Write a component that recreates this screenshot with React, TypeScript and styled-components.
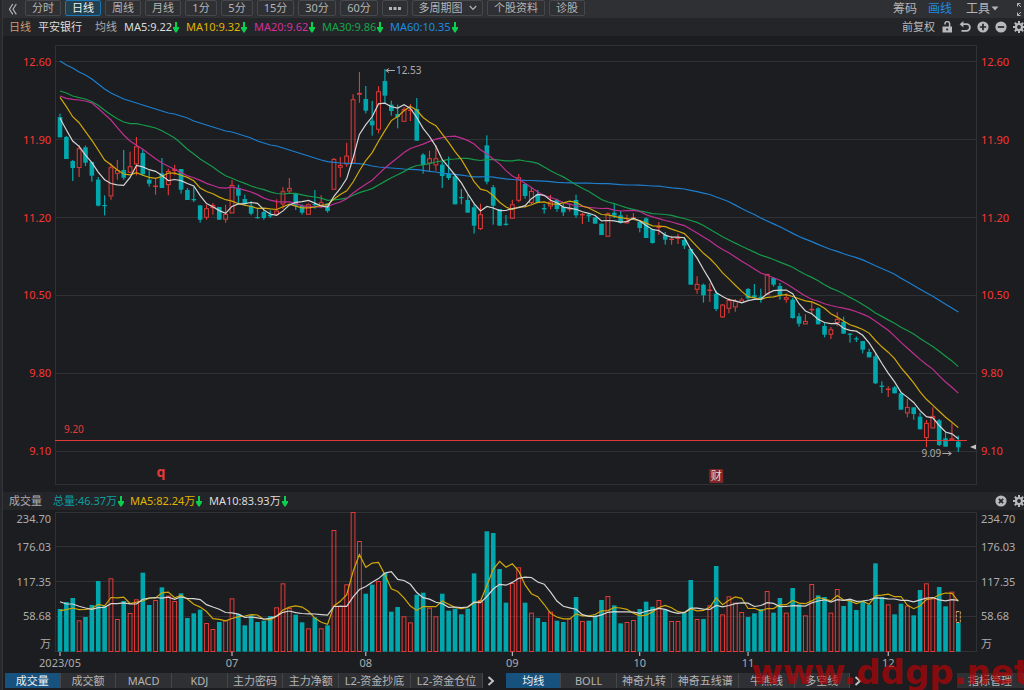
import React, { useLayoutEffect, useRef, useState } from 'react';
import styled, { createGlobalStyle, css } from 'styled-components';

const C = {
  page: '#1c1d20',
  bar: '#242528',
  tool: '#2f3033',
  edge: '#47484b',
  grid: '#303134',
  text: '#acacae',
  white: '#dcdcdc',
  up: '#e33b38',
  down: '#00a8ad',
  yellow: '#e0b400',
  pink: '#d0319c',
  green: '#15a64a',
  blue: '#1e8be0',
  arrow: '#0bd04f',
};

const GlobalStyle = createGlobalStyle`
  *, *::before, *::after { box-sizing: border-box; }
  body {
    margin: 0;
    background: ${C.page};
    color: ${C.text};
    font: 11px/16px "Noto Sans", "Noto Sans CJK SC", sans-serif;
    overflow-x: hidden;
  }
  button { font: inherit; color: inherit; margin: 0; padding: 0; border: 0; background: none; cursor: pointer; }
  svg { display: block; flex: none; }
`;

const Page = styled.main`
  position: relative;
  min-height: 100vh;
  overflow: hidden;
  border-left: 2px solid #27282b;
  box-shadow: inset 1px 0 0 #35363a;
  padding-left: 1px;
`;

const Toolbar = styled.nav`
  display: flex;
  justify-content: space-between;
  height: 18px;
  background: ${C.tool};
`;

const ToolGroup = styled.div`
  display: flex;
  gap: 4px;
  padding-left: 5px;
`;

const CollapseButton = styled.button`
  width: 13px;
  height: 16px;
`;

const PeriodButton = styled.button<{ $w: number; $active?: boolean }>`
  display: flex;
  align-items: center;
  justify-content: center;
  gap: 6px;
  width: ${p => p.$w}px;
  height: 16px;
  line-height: 14px;
  border: 1px solid ${C.edge};
  border-radius: 2px;
  color: #b4b4b6;
  white-space: nowrap;
  ${p => p.$active && css`
    border-color: #1b76b8;
    background: #22404f;
    color: #f0f0f0;
  `}
`;

const ToolLinks = styled.div`
  display: flex;
  align-items: center;
  gap: 11px;
  height: 17px;
  font-size: 12px;
`;

const ToolLink = styled.button<{ $active?: boolean; $push?: number }>`
  display: flex;
  align-items: center;
  gap: 1px;
  color: ${p => (p.$active ? C.blue : '#b4b4b6')};
  margin-left: ${p => p.$push ?? 0}px;
`;

const InfoBar = styled.header`
  display: flex;
  justify-content: space-between;
  align-items: center;
  height: 18px;
  padding-left: 6px;
  background: ${C.bar};
  white-space: nowrap;
`;

const InfoItems = styled.div`
  display: flex;
  align-items: center;
`;

const InfoItem = styled.span<{ $w: number; $color: string }>`
  display: flex;
  align-items: center;
  gap: 1px;
  width: ${p => p.$w}px;
  color: ${p => p.$color};
`;

const IconRow = styled.div`
  display: flex;
  align-items: center;
  gap: 6px;
  margin-right: -1px;
  color: #b9b9bb;
`;

const IconButton = styled.button`
  width: 12px;
  height: 12px;
`;

const ChartRow = styled.section<{ $kind: 'price' | 'volume' }>`
  display: grid;
  grid-template-columns: 52px minmax(0, 1fr) 47px;
  ${p => (p.$kind === 'price' ? 'padding: 9px 0 7px;' : 'padding-top: 2px;')}
`;

const PriceAxis = styled.div<{ $side: 'left' | 'right' }>`
  display: flex;
  flex-direction: column;
  justify-content: space-between;
  height: 440px;
  padding: 9px 4px 26px;
  color: #f93632;
  text-align: ${p => (p.$side === 'left' ? 'right' : 'left')};
`;

const VolumeAxis = styled.div<{ $side: 'left' | 'right' }>`
  display: grid;
  grid-template-rows: 14px 42px 28px 40px 16px;
  align-items: center;
  height: 161px;
  align-content: start;
  padding: 0 4px;
  text-align: ${p => (p.$side === 'left' ? 'right' : 'left')};
`;

const Plot = styled.svg`
  width: 100%;
  overflow: visible;
`;

const TabBar = styled.footer`
  display: flex;
  align-items: center;
  padding-left: 2px;
`;

const TabGroup = styled.div<{ $cols: string; $w: number }>`
  display: grid;
  grid-template-columns: ${p => p.$cols};
  width: ${p => p.$w}px;
`;

const Tab = styled.button<{ $active?: boolean }>`
  height: 15px;
  line-height: 15px;
  overflow: hidden;
  white-space: nowrap;
  background: ${C.tool};
  color: #b4b4b6;
  border-right: 1px solid #45464a;
  ${p => p.$active && css`
    background: #17527f;
    color: #f0f0f0;
  `}
`;

const NextButton = styled.button`
  display: flex;
  justify-content: center;
  width: 16px;
  margin-right: 7px;
`;

const ManageButton = styled(Tab)`
  width: 67px;
  margin-left: auto;
  padding-right: 1px;
  border-right: 0;
`;

const Watermark = styled.div`
  position: absolute;
  right: -6px;
  bottom: 0;
  font: bold 34px/36px "DejaVu Sans", sans-serif;
  color: rgba(182, 4, 8, 0.7);
  pointer-events: none;
`;

/* direction, high, body top, body bottom, low, volume top (chart units) */
type Bar = [0 | 1, number, number, number, number, number];

const scale = (originY: number, volY: number, rows: Bar[]): Bar[] =>
  rows.map(([k, h, t, b, l, v]) => [k, originY + h / 3, originY + t / 3, originY + b / 3, originY + l / 3, volY + v / 3] as Bar);

const bars: Bar[] = [
  ...scale(35, -12, [
    [0, 101, 111, 172, 172, 327], [0, 168, 171, 237, 237, 306], [0, 240, 243, 264, 303, 294], [1, 195, 205, 264, 291, 361],
    [0, 197, 202, 248, 258, 351], [0, 245, 246, 287, 305, 315], [0, 291, 299, 377, 379, 243], [0, 346, 375, 378, 406, 318],
    [1, 250, 262, 349, 359, 235], [1, 240, 270, 281, 299, 357], [0, 210, 270, 293, 299, 303], [1, 215, 259, 278, 278, 339],
    [1, 171, 199, 253, 286, 298], [0, 208, 219, 283, 288, 218], [0, 272, 299, 311, 320, 315], [1, 295, 317, 320, 344, 300],
    [0, 234, 280, 324, 324, 262], [1, 266, 273, 315, 346, 287], [1, 254, 267, 273, 286, 303], [0, 267, 267, 329, 341, 280],
    [0, 324, 330, 360, 360, 354], [0, 320, 357, 361, 366, 340], [0, 376, 376, 419, 428, 329], [1, 374, 385, 413, 419, 369],
    [1, 369, 375, 384, 404, 387], [0, 381, 381, 419, 419, 366], [1, 374, 402, 419, 428, 361], [1, 300, 315, 400, 400, 295],
    [0, 314, 324, 347, 370, 342], [0, 344, 357, 372, 376, 376], [0, 363, 377, 401, 406, 346], [0, 385, 411, 414, 416, 366],
    [0, 389, 396, 414, 419, 362], [0, 391, 404, 409, 414, 348], [1, 358, 392, 404, 404, 322],
  ]),
  ...scale(15, -12, [
    [1, 382, 394, 433, 446, 250], [1, 354, 384, 394, 402, 324], [0, 400, 402, 437, 450, 344], [0, 433, 437, 458, 464, 367],
    [1, 430, 433, 464, 464, 385], [0, 390, 432, 435, 446, 352], [1, 406, 427, 437, 445, 385], [0, 430, 430, 453, 458, 376],
    [1, 294, 297, 389, 389, 90], [1, 291, 315, 323, 352, 317], [1, 248, 287, 313, 320, 253], [1, 103, 118, 310, 312, 36],
    [1, 36, 99, 104, 128, 123], [0, 78, 117, 152, 160, 281], [0, 123, 182, 196, 227, 254], [1, 79, 94, 209, 220, 243],
    [0, 27, 63, 107, 131, 219], [0, 122, 134, 153, 167, 335], [0, 134, 162, 171, 205, 321], [1, 141, 147, 185, 185, 349],
    [1, 132, 149, 152, 183, 367], [0, 114, 147, 242, 242, 284], [0, 280, 284, 315, 341, 278], [1, 272, 295, 310, 336, 323],
    [1, 256, 295, 316, 332, 349], [0, 305, 314, 348, 384, 281], [0, 290, 342, 354, 360, 332], [0, 346, 349, 433, 433, 326],
    [0, 387, 411, 414, 433, 343], [0, 404, 420, 458, 458, 326], [0, 433, 442, 497, 521, 220], [1, 431, 463, 507, 510, 300],
    [0, 226, 256, 365, 373, 94], [0, 375, 382, 437, 494, 99], [0, 447, 447, 497, 497, 207], [0, 465, 491, 495, 497, 308],
    [1, 419, 433, 476, 476, 249],
  ]),
  ...scale(85, -12, [
    [1, 132, 142, 212, 217, 202], [0, 160, 162, 198, 206, 308], [1, 172, 183, 219, 223, 338], [0, 180, 192, 219, 219, 354],
    [0, 222, 234, 238, 251, 366], [1, 194, 215, 229, 238, 335], [0, 206, 210, 237, 245, 362], [0, 222, 231, 247, 258, 366],
    [1, 220, 235, 237, 245, 355], [0, 194, 210, 256, 263, 291], [1, 249, 252, 256, 282, 363], [0, 252, 254, 259, 276, 362],
    [0, 262, 262, 281, 281, 346], [0, 281, 281, 315, 315, 300], [1, 247, 250, 320, 320, 288], [0, 221, 248, 257, 264, 316],
    [0, 243, 256, 279, 281, 370], [1, 254, 273, 280, 280, 366], [1, 249, 262, 264, 270, 360], [0, 275, 275, 294, 307, 327],
    [0, 262, 265, 324, 324, 305], [0, 297, 297, 339, 341, 320], [1, 276, 290, 293, 315, 300], [0, 306, 315, 329, 344, 329],
    [1, 317, 326, 329, 344, 363], [1, 311, 323, 326, 342, 363], [0, 321, 330, 347, 357, 339], [0, 354, 357, 464, 464, 240],
    [1, 439, 462, 479, 491, 357], [0, 461, 464, 496, 518, 357], [1, 460, 479, 482, 516, 316], [0, 482, 491, 537, 543, 198],
    [1, 522, 524, 562, 564, 343],
  ]),
  ...scale(205, -22, [
    [1, 144, 150, 176, 190, 319], [1, 147, 153, 172, 185, 338], [1, 143, 149, 158, 160, 366], [0, 114, 117, 145, 149, 381],
    [0, 102, 136, 142, 150, 370], [0, 116, 140, 148, 158, 357], [1, 72, 72, 134, 134, 303], [0, 82, 84, 104, 110, 368],
    [0, 99, 108, 135, 149, 324], [1, 130, 142, 149, 158, 368], [0, 143, 149, 204, 206, 294], [0, 189, 199, 221, 230, 343],
    [1, 193, 213, 223, 223, 376], [1, 153, 177, 180, 190, 282], [0, 172, 175, 223, 223, 316], [0, 219, 228, 254, 262, 321],
    [1, 231, 238, 254, 267, 368], [1, 187, 207, 219, 229, 297], [0, 200, 216, 251, 251, 348], [0, 249, 251, 254, 278, 330],
    [0, 260, 265, 268, 276, 360], [0, 273, 273, 299, 310, 333], [0, 296, 306, 322, 322, 344], [0, 311, 319, 400, 402, 220],
    [0, 394, 407, 411, 429, 321], [1, 409, 416, 419, 441, 343], [0, 408, 412, 430, 430, 373], [0, 425, 430, 479, 479, 341],
    [1, 447, 471, 490, 502, 347], [0, 472, 472, 492, 509, 376], [0, 488, 500, 538, 538, 300], [1, 510, 519, 564, 592, 280],
    [1, 472, 498, 535, 535, 325], [0, 507, 511, 585, 588, 291], [0, 547, 565, 590, 590, 349], [1, 520, 565, 571, 573, 305],
    [0, 557, 575, 592, 606, 399],
  ]),
];

/* Moving average; `head` holds the points whose window starts before the first bar. */
const average = (values: number[], n: number, head: number[]) =>
  values.map((_, i) => (i < head.length ? head[i] : values.slice(i - n + 1, i + 1).reduce((a, b) => a + b, 0) / n));

const closes = bars.map(([k, , top, bottom]) => (k ? top : bottom));
const volumes = bars.map(b => b[5]);
const third = (origin: number, list: number[]) => list.map(v => origin + v / 3);

const priceLines = [
  {
    color: '#1c7fd0',
    points: average(closes, 60, [
      61, 65, 68, 72, 75, 79, 84, 89, 93, 96, 99, 101, 103, 105, 107, 109, 111, 113, 114, 116, 118, 121, 123, 125, 127, 129, 131, 132,
      134, 136, 138, 141, 143, 145, 146, 148, 150, 152, 154, 156, 158, 160, 161.7, 162.3, 163, 163.3, 163.5, 163.7, 164.5, 166, 167,
      167.5, 168, 168.5, 169, 169.3, 169.7, 170.3, 171.3, 172,
    ].map(v => v - 45)),
  },
  {
    color: '#16994a',
    points: average(closes, 30, third(35, [
      33, 39, 48, 53, 57, 65, 76, 91, 104, 116, 126, 131, 131, 135, 139, 144, 152, 163, 174, 190, 208, 222, 237, 249, 261, 275, 287, 295, 303,
    ])),
  },
  {
    color: '#bf2f92',
    points: average(closes, 20, third(35, [48, 55, 58, 60, 63, 69, 85, 103, 120, 143, 165, 183, 196, 208, 222, 236, 249, 259, 268])),
  },
  { color: '#cfa70a', points: average(closes, 10, third(35, [52, 80, 110, 128, 155, 181, 210, 240, 254])) },
  { color: '#d5d5d5', points: average(closes, 5, third(35, [115, 150, 183, 199])) },
];

const volumeLines = [
  { color: '#cfa70a', points: average(volumes, 5, third(-12, [332, 329, 324, 329])) },
  { color: '#d5d5d5', points: average(volumes, 10, third(-12, [305, 312, 312, 319, 324, 328, 323, 322, 311])) },
];

const months: [number, string][] = [[0, '2023/05'], [27, '07'], [48, '08'], [71, '09'], [91, '10'], [108, '11'], [130, '12']];

function usePlotWidth() {
  const ref = useRef<SVGSVGElement>(null);
  const [width, setWidth] = useState(922);
  useLayoutEffect(() => {
    const node = ref.current;
    if (!node) return;
    const measure = () => setWidth(node.getBoundingClientRect().width);
    measure();
    const observer = new ResizeObserver(measure);
    observer.observe(node);
    return () => observer.disconnect();
  }, []);
  const x = (i: number) => 5 + ((width - 23.7) / 141) * i;
  return { ref, width, x };
}

const path = (points: number[], x: (i: number) => number) =>
  points.map((y, i) => `${i ? 'L' : 'M'}${x(i).toFixed(1)} ${y.toFixed(1)}`).join('');

function Frame({ width, height, lines }: { width: number; height: number; lines: number[] }) {
  return (
    <g fill="none" stroke={C.grid}>
      <rect x=".5" y=".5" width={width - 1} height={height - 1} />
      {lines.map(y => <path key={y} d={`M0 ${y}H${width}`} />)}
    </g>
  );
}

function PricePlot() {
  const { ref, width, x } = usePlotWidth();
  return (
    <Plot ref={ref} height="440" role="img" aria-label="平安银行 日线">
      <Frame width={width} height={440} lines={[16.5, 94.5, 172.5, 250.5, 328.5, 406.5]} />
      {bars.map(([k, h, t, b, l], i) => {
        const cx = x(i);
        return k ? (
          <g key={i} stroke={C.up} fill="none">
            <path strokeWidth="1.1" d={`M${cx} ${h}V${t}M${cx} ${b}V${l}`} />
            <rect x={cx - 1.9} y={t + 0.4} width="3.8" height={Math.max(b - t - 0.8, 0.4)} />
          </g>
        ) : (
          <g key={i} fill={C.down}>
            <rect x={cx - 0.6} y={h} width="1.2" height={l - h} />
            <rect x={cx - 2.3} y={t} width="4.6" height={Math.max(b - t, 1.2)} />
          </g>
        );
      })}
      {priceLines.map(line => (
        <path key={line.color} d={path(line.points, x)} fill="none" stroke={line.color} strokeWidth="1.2" />
      ))}
      <path d={`M0 395.5H${width - 10}`} stroke="#e23a37" />
      <text x="9" y="388" fontSize="10" fill={C.up}>9.20</text>
      <g stroke={C.text} fill="none">
        <path d={`M${x(51) + 1} 25.5h9m-6 -2l-3 2l3 2`} />
        <path d={`M${x(141) - 16} 408.5h9m-3 -2l3 2l-3 2`} />
      </g>
      <text x={x(51) + 11} y="29" fontSize="10" fill={C.text}>12.53</text>
      <text x={x(141) - 17} y="412" fontSize="10" fill={C.text} textAnchor="end">9.09</text>
      <path d={`M${width - 7} 402l6 -2.5v5z`} fill="#c4c4c4" />
      <text x={x(16) - 1} y="432" fontSize="14" fontWeight="bold" fill={C.up} textAnchor="middle">q</text>
      <rect x={x(103) - 7} y="424" width="14" height="14" rx="1" fill="#7e2628" />
      <text x={x(103)} y="435" fontSize="11" fill="#e6d8d8" textAnchor="middle">财</text>
    </Plot>
  );
}

function VolumePlot() {
  const { ref, width, x } = usePlotWidth();
  return (
    <Plot ref={ref} height="161" role="img" aria-label="成交量">
      <Frame width={width} height={140} lines={[34.5, 69.5, 104.5]} />
      {bars.map(([k, , , , , v], i) =>
        k ? (
          <rect key={i} x={x(i) - 1.9} y={v + 0.5} width="3.8" height={139 - v} fill="none" stroke={C.up} />
        ) : (
          <rect key={i} x={x(i) - 2.3} y={v} width="4.6" height={139.6 - v} fill={C.down} />
        ),
      )}
      <rect x={x(141) - 2} y="99.5" width="4" height="11" fill="none" stroke="#d9a96c" strokeDasharray="3 1" />
      {volumeLines.map(line => (
        <path key={line.color} d={path(line.points, x)} fill="none" stroke={line.color} strokeWidth="1.2" />
      ))}
      {months.map(([i, label]) => (
        <g key={label}>
          <path d={`M${x(i)} 140v4`} stroke="#d5d5d5" />
          <text x={x(i)} y="155" textAnchor="middle" fill={C.text}>{label}</text>
        </g>
      ))}
    </Plot>
  );
}

const DownArrow = () => (
  <svg width="6" height="11" viewBox="0 0 6 11" fill={C.arrow}>
    <path d="M2 0h2v5h2v1.5L3.6 10.5h-1.2L0 6.5V5h2z" />
  </svg>
);

const GearIcon = () => (
  <svg width="12" height="12" viewBox="0 0 12 12" fill="none" stroke="currentColor">
    <circle cx="6" cy="6" r="3" strokeWidth="2.2" />
    <path strokeWidth="2" d="M6 0v2.5M6 9.5V12M0 6h2.5M9.5 6H12M1.8 1.8l1.7 1.7M8.5 8.5l1.7 1.7M1.8 10.2l1.7-1.7M8.5 3.5l1.7-1.7" />
  </svg>
);

const DiscIcon = ({ d }: { d: string }) => (
  <svg width="12" height="12" viewBox="0 0 12 12">
    <circle cx="6" cy="6" r="5.6" fill="currentColor" />
    <path d={d} stroke={C.bar} strokeWidth="1.7" fill="none" />
  </svg>
);

const LockIcon = () => (
  <svg width="12" height="12" viewBox="0 0 12 12">
    <path d="M1.5 5.5h9.5V11.5H1.5z" fill="currentColor" />
    <path d="M4 3.4V2.6a2.3 2 0 0 1 4.6 0V6" fill="none" stroke="currentColor" strokeWidth="1.5" />
    <circle cx="6.2" cy="8.5" r="1.1" fill={C.bar} />
  </svg>
);

const UndoIcon = () => (
  <svg width="12" height="12" viewBox="0 0 12 12">
    <path d="M2.5 3.2H7.6a2.9 2.9 0 0 1 0 6.6H2.5" fill="none" stroke="currentColor" strokeWidth="1.8" />
    <path d="M4.4 0v6.4L0.6 3.2z" fill="currentColor" />
  </svg>
);

const ChevronNext = () => (
  <svg width="8" height="10" viewBox="0 0 8 10" fill="none" stroke="#c4c4c6" strokeWidth="1.9">
    <path d="M1.5 1l4.5 4l-4.5 4" />
  </svg>
);

const periods: { label: string; w: number; active?: boolean }[] = [
  { label: '分时', w: 36 }, { label: '日线', w: 36, active: true }, { label: '周线', w: 36 }, { label: '月线', w: 36 },
  { label: '1分', w: 32 }, { label: '5分', w: 32 }, { label: '15分', w: 37 }, { label: '30分', w: 38 }, { label: '60分', w: 38 },
];

const averages = [
  { text: 'MA5:9.22', w: 62, color: C.white },
  { text: 'MA10:9.32', w: 68, color: C.yellow },
  { text: 'MA20:9.62', w: 68, color: C.pink },
  { text: 'MA30:9.86', w: 68, color: C.green },
  { text: 'MA60:10.35', w: 68, color: C.blue },
];

const volumeInfo = [
  { text: '总量:46.37万', w: 77, color: '#0b9ea3' },
  { text: 'MA5:82.24万', w: 79, color: C.yellow },
  { text: 'MA10:83.93万', w: 90, color: C.white },
];

const prices = ['12.60', '11.90', '11.20', '10.50', '9.80', '9.10'];
const amounts = ['234.70', '176.03', '117.35', '58.68', '万'];
const volumeTabs = ['成交量', '成交额', 'MACD', 'KDJ', '主力密码', '主力净额', 'L2-资金抄底', 'L2-资金仓位'];
const priceTabs = ['均线', 'BOLL', '神奇九转', '神奇五线谱', '牛熊线', '多空线'];

export default function App() {
  return (
    <Page>
      <GlobalStyle />
      <Toolbar>
        <ToolGroup>
          <CollapseButton aria-label="收起">
            <svg width="10" height="15" viewBox="0 0 10 15" fill="none" stroke="#b4b4b6" strokeWidth="1.2">
              <path d="M4.8 3L1.5 8.2L4.8 13.4M8.3 3L5 8.2L8.3 13.4" />
            </svg>
          </CollapseButton>
          {periods.map(p => <PeriodButton key={p.label} $w={p.w} $active={p.active}>{p.label}</PeriodButton>)}
          <PeriodButton $w={26} aria-label="更多">
            <svg width="12" height="3" viewBox="0 0 12 3" fill="#b4b4b6">
              <path d="M0 0h3v3H0zM4.5 0h3v3h-3zM9 0h3v3H9z" />
            </svg>
          </PeriodButton>
          <PeriodButton $w={71}>
            多周期图
            <svg width="8" height="6" viewBox="0 0 8 6" fill="none" stroke="#b4b4b6" strokeWidth="1.2">
              <path d="M.8 1L4 4.4L7.2 1" />
            </svg>
          </PeriodButton>
          <PeriodButton $w={58}>个股资料</PeriodButton>
          <PeriodButton $w={36}>诊股</PeriodButton>
        </ToolGroup>
        <ToolLinks>
          <ToolLink>筹码</ToolLink>
          <ToolLink $active>画线</ToolLink>
          <ToolLink $push={3}>
            工具
            <svg width="8" height="5" viewBox="0 0 8 5" fill="#b4b4b6"><path d="M.5 .5h7L4 4.5z" /></svg>
          </ToolLink>
          <ToolLink $push={6} aria-label="全屏">
            <svg width="8" height="14" viewBox="0 0 8 14" fill="none" stroke="#b4b4b6">
              <path d="M4.5 1.5H1.5V4.5M1.5 1.5l3.5 3.5M4.5 13.5H1.5V10.5M1.5 13.5l3.5-3.5" />
            </svg>
          </ToolLink>
        </ToolLinks>
      </Toolbar>

      <InfoBar>
        <InfoItems>
          <InfoItem $w={29} $color="#cf9a6c">日线</InfoItem>
          <InfoItem $w={57} $color={C.white}>平安银行</InfoItem>
          <InfoItem $w={29} $color={C.text}>均线</InfoItem>
          {averages.map(m => <InfoItem key={m.text} $w={m.w} $color={m.color}>{m.text}<DownArrow /></InfoItem>)}
        </InfoItems>
        <IconRow>
          <button>前复权</button>
          <IconButton aria-label="锁定"><LockIcon /></IconButton>
          <IconButton aria-label="撤销"><UndoIcon /></IconButton>
          <IconButton aria-label="放大"><DiscIcon d="M6 2.8v6.4M2.8 6h6.4" /></IconButton>
          <IconButton aria-label="缩小"><DiscIcon d="M2.8 6h6.4" /></IconButton>
          <IconButton aria-label="设置"><GearIcon /></IconButton>
        </IconRow>
      </InfoBar>

      <ChartRow $kind="price">
        <PriceAxis $side="left">{prices.map(p => <span key={p}>{p}</span>)}</PriceAxis>
        <PricePlot />
        <PriceAxis $side="right">{prices.map(p => <span key={p}>{p}</span>)}</PriceAxis>
      </ChartRow>

      <InfoBar>
        <InfoItems>
          <InfoItem $w={44} $color={C.text}>成交量</InfoItem>
          {volumeInfo.map(m => <InfoItem key={m.text} $w={m.w} $color={m.color}>{m.text}<DownArrow /></InfoItem>)}
        </InfoItems>
        <IconRow>
          <IconButton aria-label="关闭"><DiscIcon d="M3.9 3.9l4.2 4.2M8.1 3.9l-4.2 4.2" /></IconButton>
          <IconButton aria-label="设置"><GearIcon /></IconButton>
        </IconRow>
      </InfoBar>

      <ChartRow $kind="volume">
        <VolumeAxis $side="left">{amounts.map(a => <span key={a}>{a}</span>)}</VolumeAxis>
        <VolumePlot />
        <VolumeAxis $side="right">{amounts.map(a => <span key={a}>{a}</span>)}</VolumeAxis>
      </ChartRow>

      <TabBar>
        <TabGroup $cols="repeat(6, 1fr) 72px 72px" $w={478}>
          {volumeTabs.map((t, i) => <Tab key={t} $active={i === 0}>{t}</Tab>)}
        </TabGroup>
        <NextButton aria-label="更多指标"><ChevronNext /></NextButton>
        <TabGroup $cols="repeat(3, 1fr) 67px repeat(2, 1fr)" $w={344}>
          {priceTabs.map((t, i) => <Tab key={t} $active={i === 0}>{t}</Tab>)}
        </TabGroup>
        <NextButton aria-label="更多主图指标"><ChevronNext /></NextButton>
        <ManageButton>指标管理</ManageButton>
      </TabBar>
      <Watermark>www.ddgp.net</Watermark>
    </Page>
  );
}
